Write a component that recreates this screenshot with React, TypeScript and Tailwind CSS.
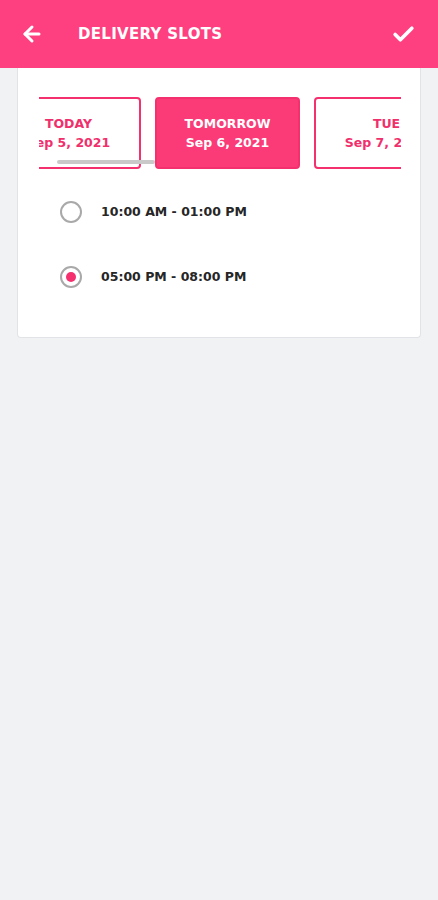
import React from "react";
import { ArrowLeft, Check } from "lucide-react";

const font = { fontFamily: '"DejaVu Sans", "Noto Sans", sans-serif' };

function Chip({ top, bottom, active }: { top: string; bottom: string; active?: boolean }) {
  return (
    <div
      className={
        "relative z-10 flex h-[72px] w-[145px] shrink-0 flex-col items-center justify-center rounded-[4px] border-2 border-[#f5306f] text-[12.5px] font-bold leading-[19px] " +
        (active ? "bg-[#fb3a78] text-white" : "bg-white text-[#f0306c]")
      }
    >
      <span>{top}</span>
      <span>{bottom}</span>
    </div>
  );
}

function Radio({ checked, label }: { checked?: boolean; label: string }) {
  return (
    <div className="flex h-[22px] items-center">
      <div className="ml-[42px] flex h-[22px] w-[22px] items-center justify-center rounded-full border-2 border-[#a9a9a9]">
        {checked && <div className="h-[10px] w-[10px] rounded-full bg-[#f5306f]" />}
      </div>
      <span className="ml-[19px] text-[12.5px] font-semibold text-[#262626]">{label}</span>
    </div>
  );
}

export default function App() {
  return (
    <div className="min-h-[900px] w-[438px] bg-[#f1f2f4]" style={font}>
      <header className="flex h-[68px] items-center bg-[#ff4080] text-white">
        <ArrowLeft className="ml-[20px]" size={24} strokeWidth={3} />
        <h1 className="ml-[34px] text-[15px] font-bold tracking-[0.3px]">DELIVERY SLOTS</h1>
        <Check className="ml-auto mr-[22px]" size={25} strokeWidth={3.5} />
      </header>
      <div className="mx-[17px] h-[270px] rounded-b-[4px] border border-t-0 border-[#e2e3e6] bg-white pt-[29px]">
        <div className="relative ml-[21px] mr-[19px] overflow-hidden">
          <div className="ml-[-43px] flex gap-[14px]">
            <Chip top="TODAY" bottom="Sep 5, 2021" />
            <Chip top="TOMORROW" bottom="Sep 6, 2021" active />
            <Chip top="TUE" bottom="Sep 7, 2021" />
          </div>
          <div className="absolute left-[18px] top-[63px] z-20 h-[4px] w-[98px] rounded-full bg-[#c9c9c9]" />
        </div>
        <div className="mt-[32px] flex flex-col gap-[43px]">
          <Radio label="10:00 AM - 01:00 PM" />
          <Radio label="05:00 PM - 08:00 PM" checked />
        </div>
      </div>
    </div>
  );
}
